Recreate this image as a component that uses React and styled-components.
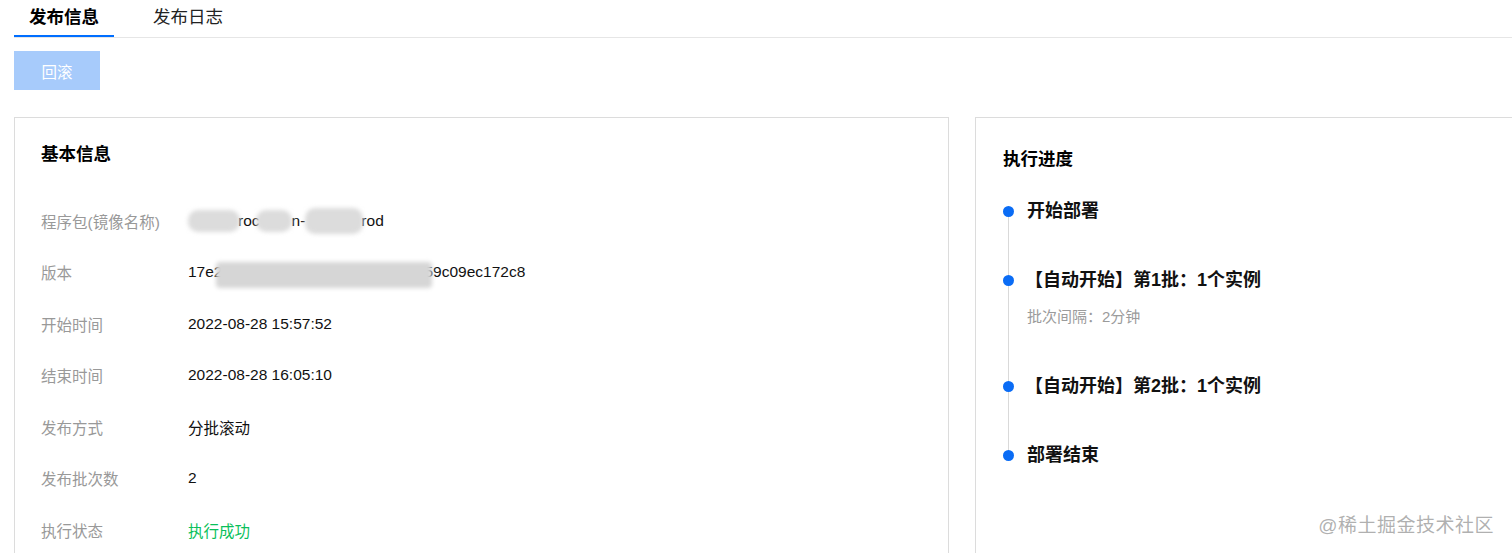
import React from 'react';
import styled, { createGlobalStyle } from 'styled-components';

const GlobalStyle = createGlobalStyle`
  html, body {
    margin: 0;
    padding: 0;
    background: #fff;
    overflow: hidden;
  }
  body {
    font-family: "Liberation Sans", "Noto Sans CJK SC", sans-serif;
    color: #000;
  }
`;

const Page = styled.div`
  position: relative;
  width: 1512px;
  height: 553px;
  overflow: hidden;
`;

const TabBar = styled.div`
  display: flex;
  margin: 0 0 0 14px;
  border-bottom: 1px solid #e6e6e6;
  height: 37px;
`;

const Tab = styled.div`
  width: 100px;
  margin-right: 24px;
  box-sizing: border-box;
  text-align: center;
  font-size: 17.5px;
  line-height: 35px;
  color: ${(p) => (p.$active ? '#000' : '#222')};
  font-weight: ${(p) => (p.$active ? 700 : 400)};
  border-bottom: 2px solid ${(p) => (p.$active ? '#006eff' : 'transparent')};
`;

const Toolbar = styled.div`
  padding: 13px 14px 0;
`;

const Button = styled.button`
  width: 86px;
  height: 39px;
  border: none;
  background: #a7cbfb;
  color: #fff;
  font-family: inherit;
  font-size: 15.5px;
  cursor: not-allowed;
`;

const Columns = styled.div`
  display: grid;
  grid-template-columns: 935px 580px;
  column-gap: 26px;
  margin: 27px 0 0 14px;
`;

const Card = styled.section`
  border: 1px solid #dcdcdc;
  border-bottom: none;
  height: 460px;
  box-sizing: border-box;
  padding: ${(p) => p.$pad || '24px 26px'};
`;

const CardTitle = styled.h3`
  margin: 0;
  font-size: 17.5px;
  line-height: 24px;
  font-weight: 700;
  color: #000;
`;

const InfoList = styled.div`
  margin-top: 29px;
`;

const InfoRow = styled.div`
  display: flex;
  align-items: center;
  height: 51.5px;
  font-size: 15.5px;
`;

const Label = styled.div`
  width: 147px;
  flex-shrink: 0;
  color: #999;
`;

const Value = styled.div`
  color: ${(p) => p.$color || '#111'};
  display: flex;
  align-items: center;
  white-space: nowrap;
`;

const Blur = styled.span`
  display: inline-block;
  width: ${(p) => p.$w}px;
  height: ${(p) => p.$h || 22}px;
  margin: ${(p) => p.$m || '0'};
  background: ${(p) => p.$bg || '#dcdcdc'};
  border-radius: ${(p) => p.$r || 10}px;
  filter: blur(2px);
`;

const Timeline = styled.div`
  margin-top: 28px;
`;

const Step = styled.div`
  position: relative;
  display: flex;
  padding-bottom: ${(p) => (p.$last ? 0 : 45)}px;

  &::after {
    content: '';
    display: ${(p) => (p.$last ? 'none' : 'block')};
    position: absolute;
    left: 5px;
    top: 12px;
    bottom: -12px;
    width: 1px;
    background: #d9d9d9;
  }
`;

const Dot = styled.span`
  position: relative;
  z-index: 1;
  width: 11px;
  height: 11px;
  margin-top: 7px;
  border-radius: 50%;
  background: #0a6cf5;
  flex-shrink: 0;
`;

const StepBody = styled.div`
  margin-left: 13px;
`;

const StepTitle = styled.div`
  font-size: 18px;
  line-height: 24px;
  font-weight: 700;
  color: #111;
  margin-left: ${(p) => (p.$bracket ? '-2px' : '0')};
`;

const StepDesc = styled.div`
  margin-top: 13px;
  font-size: 15px;
  line-height: 24px;
  color: #9b9b9b;
`;

const Watermark = styled.div`
  position: absolute;
  right: 18px;
  bottom: 16px;
  font-size: 19px;
  color: rgba(150, 150, 150, 0.75);
  letter-spacing: 0.5px;
`;

const steps = [
  { title: '开始部署' },
  { title: '【自动开始】第1批：1个实例', desc: '批次间隔：2分钟', bracket: true },
  { title: '【自动开始】第2批：1个实例', bracket: true },
  { title: '部署结束' },
];

const App = () => (
  <Page>
    <GlobalStyle />
    <TabBar>
      <Tab $active>发布信息</Tab>
      <Tab>发布日志</Tab>
    </TabBar>
    <Toolbar>
      <Button disabled>回滚</Button>
    </Toolbar>
    <Columns>
      <Card>
        <CardTitle>基本信息</CardTitle>
        <InfoList>
          <InfoRow>
            <Label>程序包(镜像名称)</Label>
            <Value>
              <Blur $w={52} $m="0 -2px 0 0" />
              roc
              <Blur $w={36} $m="0 0 0 -4px" />
              n-
              <Blur $w={58} $m="0 -2px 0 0" $h={26} />
              rod
            </Value>
          </InfoRow>
          <InfoRow>
            <Label>版本</Label>
            <Value>
              17e2
              <Blur $w={216} $h={26} $r={4} $m="6px -8px 0 -6px" $bg="#d6d6d6" />
              59c09ec172c8
            </Value>
          </InfoRow>
          <InfoRow>
            <Label>开始时间</Label>
            <Value>2022-08-28 15:57:52</Value>
          </InfoRow>
          <InfoRow>
            <Label>结束时间</Label>
            <Value>2022-08-28 16:05:10</Value>
          </InfoRow>
          <InfoRow>
            <Label>发布方式</Label>
            <Value>分批滚动</Value>
          </InfoRow>
          <InfoRow>
            <Label>发布批次数</Label>
            <Value>2</Value>
          </InfoRow>
          <InfoRow>
            <Label>执行状态</Label>
            <Value $color="#0abf5b">执行成功</Value>
          </InfoRow>
        </InfoList>
      </Card>
      <Card $pad="29px 27px">
        <CardTitle>执行进度</CardTitle>
        <Timeline>
          {steps.map((s, i) => (
            <Step key={i} $last={i === steps.length - 1}>
              <Dot />
              <StepBody>
                <StepTitle $bracket={s.bracket}>{s.title}</StepTitle>
                {s.desc && <StepDesc>{s.desc}</StepDesc>}
              </StepBody>
            </Step>
          ))}
        </Timeline>
      </Card>
    </Columns>
    <Watermark>@稀土掘金技术社区</Watermark>
  </Page>
);

export default App;
